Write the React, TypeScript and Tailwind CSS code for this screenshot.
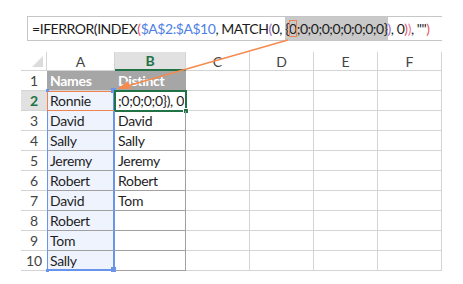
import React from 'react';

const COLS = ['A', 'B', 'C', 'D', 'E', 'F'];
const NAMES = ['Ronnie', 'David', 'Sally', 'Jeremy', 'Robert', 'David', 'Robert', 'Tom', 'Sally'];
const DISTINCT = ['', 'David', 'Sally', 'Jeremy', 'Robert', 'Tom', '', '', ''];

const cellText = 'text-[14px] tracking-[-0.3px]';

function FormulaBar() {
  return (
    <div className="pt-[16px] pl-[27px]">
      <div className="w-[415px] h-[25px] border border-r-0 border-[#c6c6c6] pl-[4px] text-[14px] tracking-[-0.45px] leading-[23px] whitespace-pre text-[#1b1b1b] overflow-hidden">
        <span>=IFERROR(INDEX</span>
        <span className="text-[#e5525f]">(</span>
        <span className="text-[#4d80e6]">$A$2:$A$10</span>
        <span>, MATCH</span>
        <span className="text-[#9b6bd0]">(</span>
        <span>0, </span>
        <span className="inline-block align-top bg-[#c9c9c9] h-[23px]">
          <span>{'{'}</span>
          <span className="outline outline-1 outline-[#f0834d] -outline-offset-1">0</span>
          <span>{';0;0;0;0;0;0;0;0}'}</span>
        </span>
        <span className="text-[#9b6bd0]">)</span>
        <span>, 0</span>
        <span className="text-[#e5525f]">)</span>
        <span className="text-[#e87aa0]">)</span>
        <span>, ""</span>
        <span className="text-[#e5525f]">)</span>
      </div>
    </div>
  );
}

function Handle({ className }: { className: string }) {
  return <div className={`absolute bg-[#6a94ea] ${className}`} />;
}

function Grid() {
  const cells: React.ReactNode[] = [];
  cells.push(
    <div key="corner" className="border-b border-r border-[#d4d4d4] flex items-end justify-end pr-[3px] pb-[3px]">
      <div className="w-0 h-0 border-l-[11px] border-l-transparent border-b-[11px] border-b-[#dcdcdc]" />
    </div>
  );
  COLS.forEach((c) => {
    const active = c === 'B';
    cells.push(
      <div
        key={'h' + c}
        className={
          active
            ? 'bg-[#e1e1e1] border-b-2 border-b-[#217346] border-r border-r-[#d4d4d4] flex items-center justify-center text-[14px] font-bold text-[#217346]'
            : 'border-b border-r border-[#d4d4d4] flex items-center justify-center text-[14px] text-[#444]'
        }
      >
        {c}
      </div>
    );
  });
  for (let r = 1; r <= 10; r++) {
    const activeRow = r === 2;
    cells.push(
      <div
        key={'r' + r}
        className={
          activeRow
            ? 'bg-[#e1e1e1] border-b border-[#d4d4d4] flex items-center justify-center text-[14px] font-bold text-[#217346]'
            : 'border-b border-[#d4d4d4] flex items-center justify-center text-[14px] text-[#444]'
        }
      >
        {r}
      </div>
    );
    if (r === 1) {
      cells.push(
        <div key="a1" className={`bg-[#a6a6a6] border-b border-[#d4d4d4] flex items-center pl-[3px] ${cellText} font-bold text-white`}>
          Names
        </div>
      );
      cells.push(
        <div key="b1" className={`bg-[#a6a6a6] border-b border-[#d4d4d4] flex items-center pl-[3px] ${cellText} font-bold text-white`}>
          Distinct
        </div>
      );
    } else {
      const first = r === 2;
      const last = r === 10;
      cells.push(
        <div
          key={'a' + r}
          className={`relative bg-[#eef3fd] border-l border-l-[#6a94ea] border-r-2 border-r-[#6a94ea] flex items-center pl-[2px] ${cellText} text-[#1e1e1e] ${
            last ? 'border-b-2 border-b-[#6a94ea]' : 'border-b border-b-[#a0a0a0]'
          } ${first ? 'outline outline-1 outline-[#f0834d] -outline-offset-1' : ''}`}
        >
          {NAMES[r - 2]}
          {first && <Handle className="left-[-2px] top-[-2px] w-[3px] h-[3px]" />}
          {first && <Handle className="right-[-3px] top-[-3px] w-[5px] h-[5px]" />}
          {last && <Handle className="left-[-2px] bottom-[-3px] w-[3px] h-[3px]" />}
          {last && <Handle className="right-[-3px] bottom-[-3px] w-[5px] h-[5px]" />}
        </div>
      );
      cells.push(
        <div
          key={'b' + r}
          className={`relative border-b border-r border-[#a0a0a0] flex items-center pl-[3px] ${cellText} text-[#1e1e1e] whitespace-pre ${
            first ? 'outline-2 outline-solid outline-[#217346] -outline-offset-1' : ''
          }`}
        >
          {first ? <span className="overflow-hidden">{';0;0;0;0}), 0'}</span> : DISTINCT[r - 2]}
          {first && <div className="absolute right-[-4px] bottom-[-4px] w-[6px] h-[6px] bg-[#217346] border border-white" />}
        </div>
      );
    }
    for (let c = 0; c < 4; c++) {
      cells.push(<div key={'x' + r + c} className="border-b border-r border-[#d4d4d4]" />);
    }
  }
  return (
    <div className="mt-[11px] ml-[21px] w-[421px] grid grid-cols-[26px_68px_71px_64px_64px_64px_64px] grid-rows-[19px_repeat(10,20px)]">
      {cells}
    </div>
  );
}

export default function App() {
  return (
    <div className="relative w-[463px] h-[284px] bg-white overflow-hidden font-['Lato','Noto_Sans',sans-serif]">
      <FormulaBar />
      <Grid />

      {/* callout arrow from the highlighted array to B2 */}
      <svg className="absolute left-0 top-0 pointer-events-none" width="463" height="284" viewBox="0 0 463 284">
        <line x1="288" y1="40" x2="127" y2="86" stroke="#f58a4f" strokeWidth="1.5" />
        <polygon points="117,89 128,81 131,89" fill="#f58a4f" />
      </svg>
    </div>
  );
}
